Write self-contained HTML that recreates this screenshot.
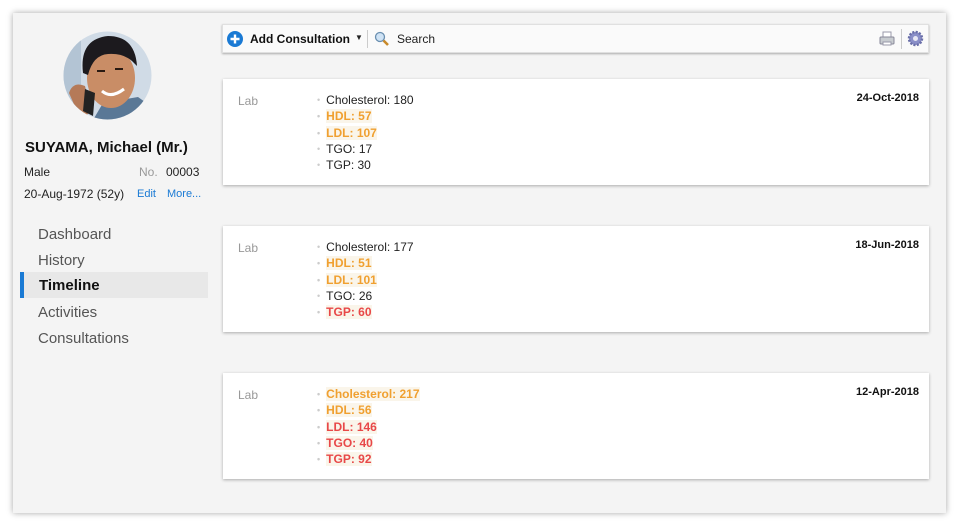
<!DOCTYPE html>
<html><head><meta charset="utf-8"><style>
*{margin:0;padding:0;box-sizing:border-box}
body{width:960px;height:526px;background:#fff;font-family:"Liberation Sans",Arial,sans-serif;position:relative;overflow:hidden;color:#222}
.win{position:absolute;left:13px;top:13px;width:933px;height:500px;background:#f4f4f4;box-shadow:0 0 6px rgba(0,0,0,.35)}
.a{position:absolute;white-space:nowrap}
.nav{position:absolute;left:38px;font-size:15px;color:#555}
.card{position:absolute;left:223px;width:706px;height:106px;background:#fff;box-shadow:0 1px 3px rgba(0,0,0,.3)}
.card .lab{position:absolute;left:15px;top:15px;font-size:12px;color:#999}
.card .date{position:absolute;right:10px;top:13px;font-size:11px;font-weight:bold;color:#111}
.card ul{position:absolute;left:94px;top:13px;list-style:none;font-size:12px;line-height:16.3px}
.card li:before{content:"•";color:#ccc;font-size:9px;margin-right:6px;vertical-align:1px}
.o{color:#f0a030;font-weight:bold}
.o span,.r span{background:#faf5ea}
.r{color:#e84848;font-weight:bold}
</style></head><body>
<div class="win"></div>
<svg class="a" style="left:63px;top:31px" width="89" height="89" viewBox="0 0 89 89">
<defs><clipPath id="c"><circle cx="44.5" cy="44.5" r="44"/></clipPath></defs>
<g clip-path="url(#c)">
<rect width="89" height="89" fill="#d0dbe6"/>
<rect x="0" y="0" width="18" height="89" fill="#b3c4d4"/>
<path d="M30 89 L40 72 L75 66 L89 76 L89 89Z" fill="#5a7896"/>
<ellipse cx="48" cy="47" rx="24" ry="30" fill="#c98d66"/>
<path d="M20 42 Q16 8 45 5 Q72 5 74 35 L69 30 Q60 22 45 23 Q30 24 25 44Z" fill="#1c1a1e"/>
<path d="M6 62 Q10 50 22 55 L28 80 L18 89 Z" fill="#b57a58"/>
<path d="M22 58 L32 62 L30 85 L20 80Z" fill="#222"/>
<path d="M39 60 Q48 68 61 58" stroke="#fff" stroke-width="3" fill="none"/>
<path d="M34 40 h8 M52 38 h8" stroke="#2a1a12" stroke-width="2"/>
</g></svg>
<div class="a" style="left:25px;top:139px;font-size:15px;font-weight:bold;color:#111">SUYAMA, Michael (Mr.)</div>
<div class="a" style="left:24px;top:165px;font-size:12px">Male</div>
<div class="a" style="left:139px;top:165px;font-size:12px;color:#999">No.</div>
<div class="a" style="left:166px;top:165px;font-size:12px">00003</div>
<div class="a" style="left:24px;top:187px;font-size:12px">20-Aug-1972 (52y)</div>
<div class="a" style="left:137px;top:188px;font-size:11px;color:#1a7ad4">Edit</div>
<div class="a" style="left:167px;top:188px;font-size:11px;color:#1a7ad4">More...</div>
<div class="nav" style="top:226px">Dashboard</div>
<div class="nav" style="top:252px">History</div>
<div class="a" style="left:20px;top:272px;width:188px;height:26px;background:#e8e8e8;border-left:4px solid #1a7ad4"></div>
<div class="nav" style="top:277px;left:39px;font-weight:bold;color:#111">Timeline</div>
<div class="nav" style="top:304px">Activities</div>
<div class="nav" style="top:330px">Consultations</div>

<div class="a" style="left:222px;top:24px;width:707px;height:29px;background:#fafafa;box-shadow:0 1px 2px rgba(0,0,0,.3);border:1px solid #e0e0e0"></div>
<svg class="a" style="left:227px;top:31px" width="16" height="16"><circle cx="8" cy="8" r="8" fill="#1a7ad4"/><path d="M8 3.5v9M3.5 8h9" stroke="#fff" stroke-width="2.4"/></svg>
<div class="a" style="left:250px;top:32px;font-size:12px;font-weight:bold;color:#111">Add Consultation</div>
<div class="a" style="left:355px;top:33px;font-size:8px">▼</div>
<div class="a" style="left:367px;top:30px;width:1px;height:18px;background:#ccc"></div>
<svg class="a" style="left:374px;top:31px" width="16" height="16"><circle cx="6" cy="6" r="4.5" fill="#cfe3f5" stroke="#6a8fb0" stroke-width="1.3"/><path d="M9.5 9.5L14 14" stroke="#c88a2a" stroke-width="2.6"/></svg>
<div class="a" style="left:397px;top:32px;font-size:12px">Search</div>
<svg class="a" style="left:879px;top:31px" width="16" height="16"><rect x="4" y="1" width="8" height="6" fill="#fff" stroke="#99a"/><rect x="1" y="6" width="14" height="7" rx="1" fill="#c8ccd0" stroke="#889"/><rect x="4" y="11" width="8" height="3" fill="#fff" stroke="#99a"/></svg>
<div class="a" style="left:901px;top:29px;width:1px;height:20px;background:#ccc"></div>
<svg class="a" style="left:907px;top:30px" width="17" height="17" viewBox="0 0 17 17"><circle cx="8.5" cy="8.5" r="6.5" fill="#8a8fc8" stroke="#6a6fa8" stroke-width="2.5" stroke-dasharray="2 1.4"/><circle cx="8.5" cy="8.5" r="2.5" fill="#e8e8f4"/></svg>

<div class="card" style="top:79px"><div class="lab">Lab</div><div class="date">24-Oct-2018</div>
<ul><li>Cholesterol: 180</li><li class="o"><span>HDL: 57</span></li><li class="o"><span>LDL: 107</span></li><li>TGO: 17</li><li>TGP: 30</li></ul></div>
<div class="card" style="top:226px"><div class="lab">Lab</div><div class="date">18-Jun-2018</div>
<ul><li>Cholesterol: 177</li><li class="o"><span>HDL: 51</span></li><li class="o"><span>LDL: 101</span></li><li>TGO: 26</li><li class="r"><span>TGP: 60</span></li></ul></div>
<div class="card" style="top:373px"><div class="lab">Lab</div><div class="date">12-Apr-2018</div>
<ul><li class="o"><span>Cholesterol: 217</span></li><li class="o"><span>HDL: 56</span></li><li class="r"><span>LDL: 146</span></li><li class="r"><span>TGO: 40</span></li><li class="r"><span>TGP: 92</span></li></ul></div>
</body></html>
